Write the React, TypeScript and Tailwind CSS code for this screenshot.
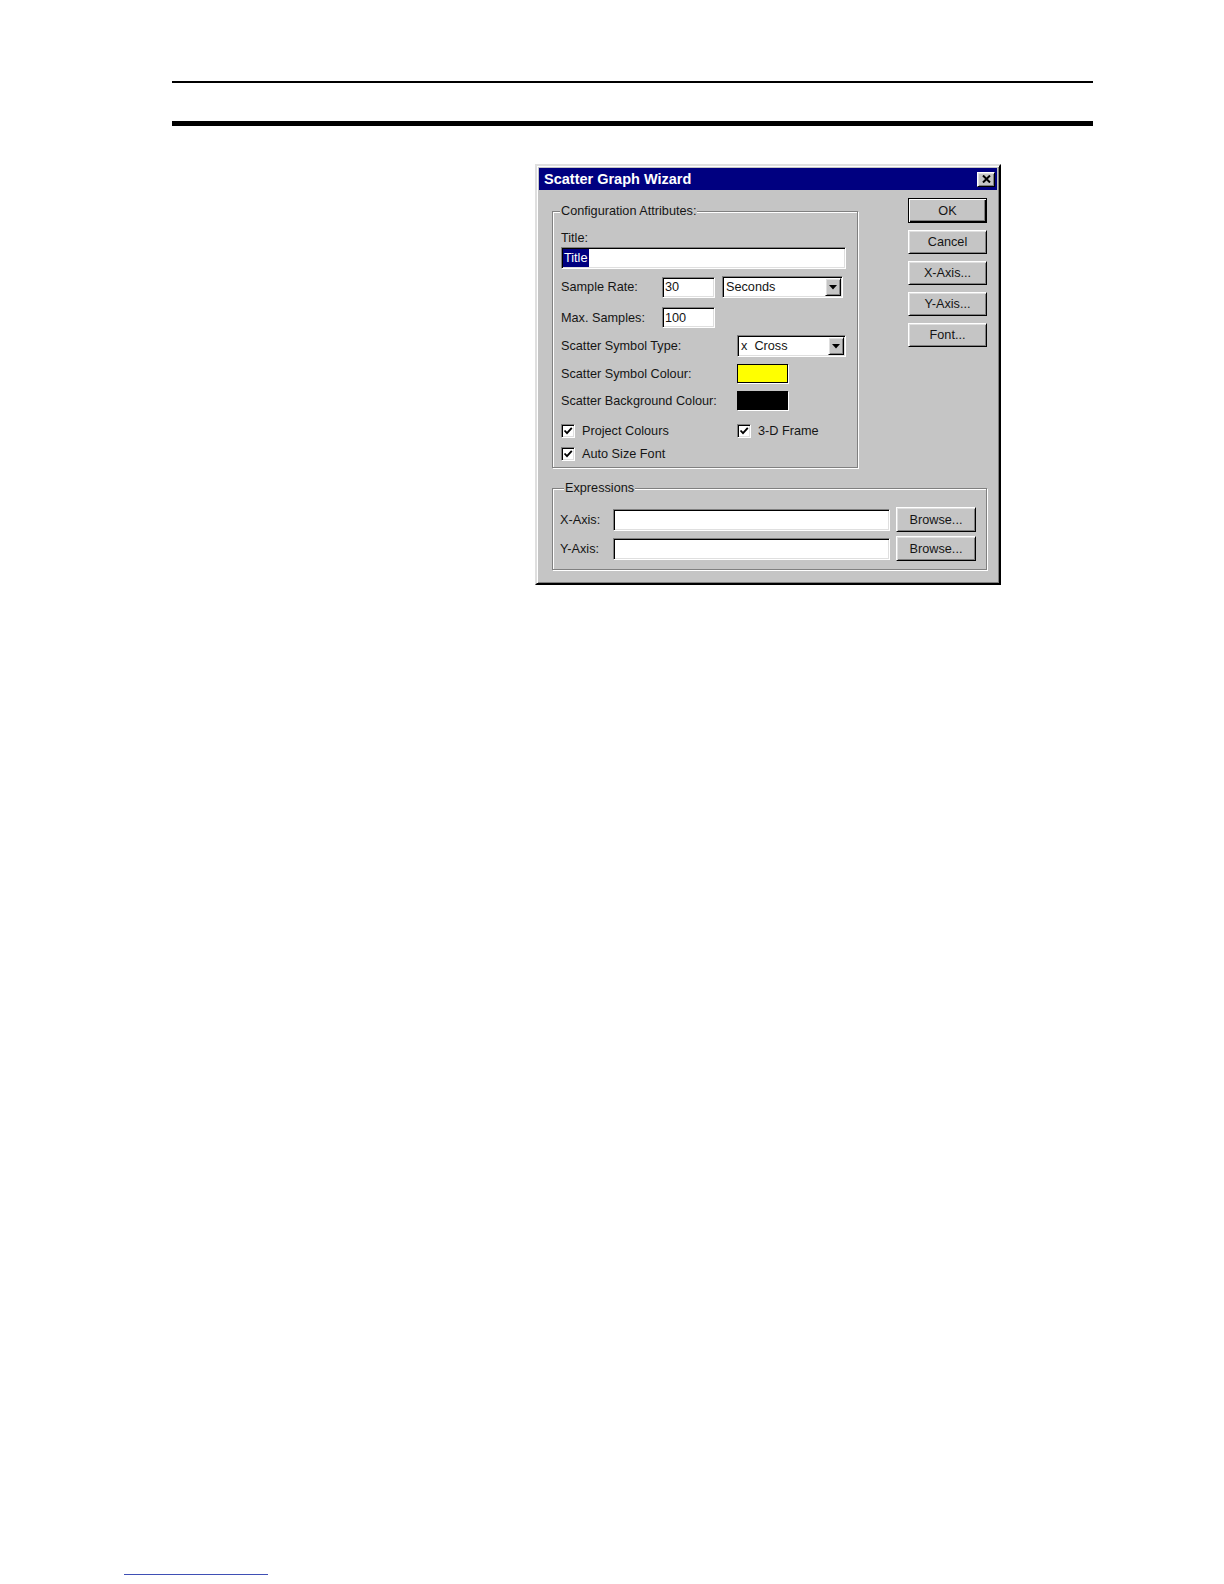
import React from 'react';

// Win95-ish bevels
const sunken =
  'bg-white border border-t-[#808080] border-l-[#808080] border-b-white border-r-white shadow-[inset_1px_1px_0_#000,inset_-1px_-1px_0_#dfdfdf]';
const raised =
  'bg-[#c5c5c5] border border-t-white border-l-white border-b-black border-r-black shadow-[inset_1px_1px_0_#dfdfdf,inset_-1px_-1px_0_#808080]';
const etched = 'border border-[#808080] shadow-[inset_1px_1px_0_#fff,1px_1px_0_#fff]';

const Arrow = () => (
  <svg width="8" height="5" viewBox="0 0 8 5">
    <path d="M0 0 H8 L4 4.5 Z" fill="#000" />
  </svg>
);

const Select = ({ w, text }: { w: string; text: string }) => (
  <div className={`${sunken} ${w} h-[22px] flex items-stretch p-[1px]`}>
    <span className="flex-1 flex items-center pl-[2px] whitespace-pre">{text}</span>
    <div className={`${raised} w-[16px] flex items-center justify-center`}>
      <Arrow />
    </div>
  </div>
);

const Check = ({ label }: { label: string }) => (
  <div className="flex items-center">
    <div className={`${sunken} w-[14px] h-[14px] flex items-center justify-center`}>
      <svg width="10" height="10" viewBox="0 0 10 10">
        <path d="M1.5 4.5 L4 7.2 L8.8 1.8" stroke="#000" strokeWidth="1.8" fill="none" />
      </svg>
    </div>
    <span className="ml-[7px]">{label}</span>
  </div>
);

const Button = ({ children, def }: { children: React.ReactNode; def?: boolean }) => (
  <div
    className={
      def
        ? 'w-[79px] h-[25px] bg-[#c5c5c5] border border-black shadow-[inset_1px_1px_0_#fff,inset_-1px_-1px_0_#000,inset_-2px_-2px_0_#808080] flex items-center justify-center'
        : `${raised} w-[79px] h-[24px] flex items-center justify-center`
    }
  >
    {children}
  </div>
);

export default function App() {
  return (
    <div className="w-full h-[1584px] bg-white font-['Liberation_Sans',Arial,sans-serif] text-[12.7px] leading-[14px] text-[#151515] overflow-hidden">
      {/* header rules */}
      <div className="ml-[172px] w-[921px] pt-[81px]">
        <div className="h-[2px] bg-black" />
        <div className="mt-[38px] h-[5px] bg-black" />
      </div>

      {/* dialog */}
      <div className="mt-[38px] ml-[535px] w-[466px] bg-[#c5c5c5] border-2 border-t-[#dfdfdf] border-l-[#dfdfdf] border-b-black border-r-black shadow-[inset_1px_1px_0_#fff,inset_-1px_-1px_0_#808080] p-[2px]">
        <div className="h-[22px] bg-[#000080] flex items-center justify-between pl-[5px] pr-[2px]">
          <span className="text-white font-bold text-[14.5px]">Scatter Graph Wizard</span>
          <div className={`${raised} w-[18px] h-[15px] flex items-center justify-center`}>
            <svg width="9" height="8" viewBox="0 0 9 8">
              <path d="M1 0.5 L8 7.5 M8 0.5 L1 7.5" stroke="#000" strokeWidth="2" />
            </svg>
          </div>
        </div>

        <div className="pl-[13px] pb-[11px]">
          <div className="flex items-start pt-[8px]">
            <fieldset className={`${etched} mt-[6px] w-[306px]`}>
              <legend className="ml-[7px] px-[1px] bg-[#c5c5c5]">Configuration Attributes:</legend>
              <div className="px-[8px] pb-[6px]">
                <div className="mt-[13px] h-[14px]">Title:</div>
                <div className={`${sunken} mt-[2px] w-[285px] h-[22px] flex items-stretch p-[1px]`}>
                  <span className="flex items-center px-[1px] bg-[#000080] text-white">Title</span>
                </div>

                <div className="mt-[7px] h-[22px] flex items-center">
                  <span className="w-[101px]">Sample Rate:</span>
                  <div className={`${sunken} w-[53px] h-[21px] flex items-center pl-[2px]`}>30</div>
                  <div className="ml-[7px]">
                    <Select w="w-[121px]" text="Seconds" />
                  </div>
                </div>

                <div className="mt-[9px] h-[21px] flex items-center">
                  <span className="w-[101px]">Max. Samples:</span>
                  <div className={`${sunken} w-[53px] h-[21px] flex items-center pl-[2px]`}>100</div>
                </div>

                <div className="mt-[7px] h-[22px] flex items-center">
                  <span className="w-[176px]">Scatter Symbol Type:</span>
                  <Select w="w-[109px]" text="x  Cross" />
                </div>

                <div className="mt-[7px] h-[19px] flex items-center">
                  <span className="w-[176px]">Scatter Symbol Colour:</span>
                  <div className="w-[51px] h-[19px] bg-[#ffff00] border border-black shadow-[1px_1px_0_#fff]" />
                </div>

                <div className="mt-[8px] h-[19px] flex items-center">
                  <span className="w-[176px]">Scatter Background Colour:</span>
                  <div className="w-[51px] h-[19px] bg-black border border-black shadow-[1px_1px_0_#fff]" />
                </div>

                <div className="mt-[13px] h-[15px] flex items-center">
                  <div className="w-[176px]">
                    <Check label="Project Colours" />
                  </div>
                  <Check label="3-D Frame" />
                </div>

                <div className="mt-[8px] h-[15px] flex items-center">
                  <Check label="Auto Size Font" />
                </div>
              </div>
            </fieldset>

            <div className="ml-[50px] flex flex-col gap-[7px]">
              <Button def>OK</Button>
              <Button>Cancel</Button>
              <Button>X-Axis...</Button>
              <Button>Y-Axis...</Button>
              <Button>Font...</Button>
            </div>
          </div>

          <fieldset className={`${etched} mt-[13px] w-[435px]`}>
            <legend className="ml-[11px] px-[1px] bg-[#c5c5c5]">Expressions</legend>
            <div className="pl-[7px] pb-[8px]">
              <div className="mt-[12px] h-[25px] flex items-center">
                <span className="w-[53px]">X-Axis:</span>
                <div className={`${sunken} w-[277px] h-[22px]`} />
                <div className={`${raised} ml-[6px] w-[80px] h-[25px] flex items-center justify-center`}>Browse...</div>
              </div>
              <div className="mt-[4px] h-[25px] flex items-center">
                <span className="w-[53px]">Y-Axis:</span>
                <div className={`${sunken} w-[277px] h-[22px]`} />
                <div className={`${raised} ml-[6px] w-[80px] h-[25px] flex items-center justify-center`}>Browse...</div>
              </div>
            </div>
          </fieldset>
        </div>
      </div>

      {/* footer rule */}
      <div className="mt-[989px] ml-[124px] w-[144px] h-px bg-[#3f4fb5]" />
    </div>
  );
}
